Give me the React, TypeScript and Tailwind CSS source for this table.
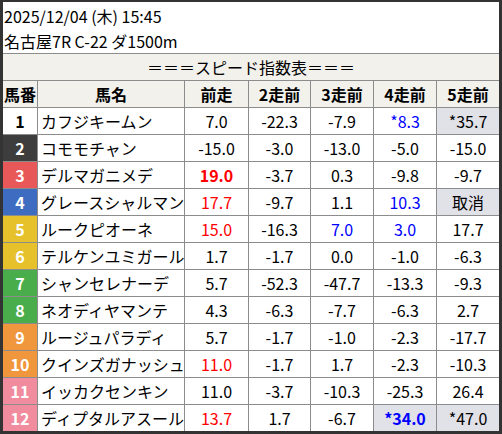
const font = { fontFamily: '"Noto Sans CJK JP", "Noto Sans", sans-serif' }

type Cell = { v: string; c?: 'red' | 'blue'; b?: boolean; hl?: boolean }

interface Row {
  no: number
  gate: string
  name: string
  vals: Cell[]
}

const rows: Row[] = [
  { no: 1, gate: 'bg-white text-black', name: 'カフジキームン', vals: [{ v: '7.0' }, { v: '-22.3' }, { v: '-7.9' }, { v: '*8.3', c: 'blue' }, { v: '*35.7', hl: true }] },
  { no: 2, gate: 'bg-[#3d3d3d] text-white', name: 'コモモチャン', vals: [{ v: '-15.0' }, { v: '-3.0' }, { v: '-13.0' }, { v: '-5.0' }, { v: '-15.0' }] },
  { no: 3, gate: 'bg-[#e85858] text-white', name: 'デルマガニメデ', vals: [{ v: '19.0', c: 'red', b: true }, { v: '-3.7' }, { v: '0.3' }, { v: '-9.8' }, { v: '-9.7' }] },
  { no: 4, gate: 'bg-[#3e6cc0] text-white', name: 'グレースシャルマン', vals: [{ v: '17.7', c: 'red' }, { v: '-9.7' }, { v: '1.1' }, { v: '10.3', c: 'blue' }, { v: '取消', hl: true }] },
  { no: 5, gate: 'bg-[#e6c12b] text-white', name: 'ルークピオーネ', vals: [{ v: '15.0', c: 'red' }, { v: '-16.3' }, { v: '7.0', c: 'blue' }, { v: '3.0', c: 'blue' }, { v: '17.7' }] },
  { no: 6, gate: 'bg-[#e6c12b] text-white', name: 'テルケンユミガール', vals: [{ v: '1.7' }, { v: '-1.7' }, { v: '0.0' }, { v: '-1.0' }, { v: '-6.3' }] },
  { no: 7, gate: 'bg-[#4aad4c] text-white', name: 'シャンセレナーデ', vals: [{ v: '5.7' }, { v: '-52.3' }, { v: '-47.7' }, { v: '-13.3' }, { v: '-9.3' }] },
  { no: 8, gate: 'bg-[#4aad4c] text-white', name: 'ネオディヤマンテ', vals: [{ v: '4.3' }, { v: '-6.3' }, { v: '-7.7' }, { v: '-6.3' }, { v: '2.7' }] },
  { no: 9, gate: 'bg-[#f0963c] text-white', name: 'ルージュパラディ', vals: [{ v: '5.7' }, { v: '-1.7' }, { v: '-1.0' }, { v: '-2.3' }, { v: '-17.7' }] },
  { no: 10, gate: 'bg-[#f0963c] text-white', name: 'クインズガナッシュ', vals: [{ v: '11.0', c: 'red' }, { v: '-1.7' }, { v: '1.7' }, { v: '-2.3' }, { v: '-10.3' }] },
  { no: 11, gate: 'bg-[#f08c9e] text-white', name: 'イッカクセンキン', vals: [{ v: '11.0' }, { v: '-3.7' }, { v: '-10.3' }, { v: '-25.3' }, { v: '26.4' }] },
  { no: 12, gate: 'bg-[#f08c9e] text-white', name: 'ディプタルアスール', vals: [{ v: '13.7', c: 'red' }, { v: '1.7' }, { v: '-6.7' }, { v: '*34.0', c: 'blue', b: true, hl: true }, { v: '*47.0', hl: true }] },
]

const headers = ['馬番', '馬名', '前走', '2走前', '3走前', '4走前', '5走前']

function ValueCell({ cell }: { cell: Cell }) {
  const color = cell.c === 'red' ? 'text-[#ff0000]' : cell.c === 'blue' ? 'text-[#0000ff]' : 'text-black'
  return (
    <div
      className={`flex items-center justify-center text-[16px] ${color} ${cell.b ? 'font-bold' : ''} ${
        cell.hl ? 'bg-[#e1e1e8]' : 'bg-white'
      }`}
    >
      {cell.v}
    </div>
  )
}

export default function App() {
  return (
    <div
      className="w-[502px] h-[434px] bg-white border-[#333333] border-t-2 border-l-[3px] border-r-[3px] border-b-[3px] flex flex-col overflow-hidden"
      style={font}
    >
      {/* race info */}
      <div className="h-[51px] shrink-0 px-[1px] pt-[2px] text-[16px] leading-[25px] text-black">
        <div>2025/12/04 (木) 15:45</div>
        <div>名古屋7R C-22 ダ1500m</div>
      </div>

      <div className="grid grid-cols-[34px_146px_63px_61px_62px_62px_62px] grid-rows-[26px] auto-rows-[26px] gap-px bg-[#8c8c8c] border-t border-[#8c8c8c]">
        <div className="col-span-7 flex items-center justify-center bg-[#f2f1ec] text-[16px] text-black">
          ＝＝＝スピード指数表＝＝＝
        </div>

        {headers.map((h) => (
          <div key={h} className="flex items-center justify-center bg-[#f2f1ec] text-[16px] font-bold text-black">
            {h}
          </div>
        ))}

        {rows.map((r) => (
          <div key={r.no} className="contents">
            <div className={`flex items-center justify-center text-[16px] font-bold ${r.gate}`}>{r.no}</div>
            <div className="flex items-center bg-white pl-[3px] text-[16px] text-black whitespace-nowrap overflow-hidden">
              {r.name}
            </div>
            {r.vals.map((c, i) => (
              <ValueCell key={i} cell={c} />
            ))}
          </div>
        ))}
      </div>
    </div>
  )
}
